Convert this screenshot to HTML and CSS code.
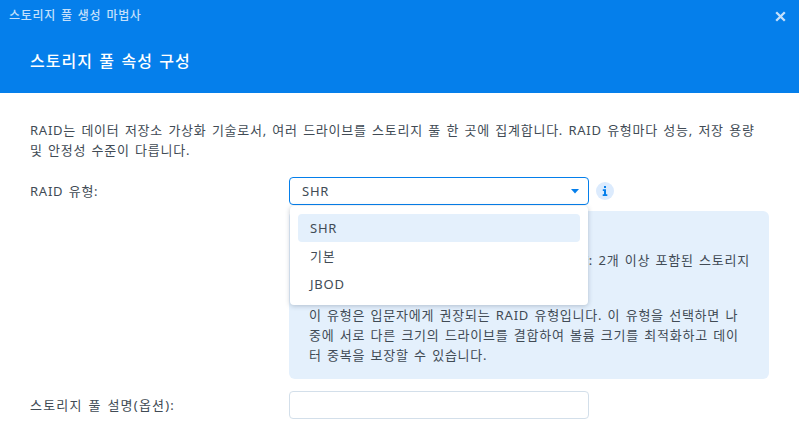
FILE: index.html
```html
<!DOCTYPE html>
<html lang="ko">
<head>
<meta charset="utf-8">
<title>스토리지 풀 생성 마법사</title>
<link rel="stylesheet" href="styles.css">
</head>
<body>
<div class="wizard">
  <header class="header">
    <div class="titlebar">
      <span class="app-title">스토리지 풀 생성 마법사</span>
      <svg class="close" width="11" height="11" viewBox="0 0 11 11" aria-hidden="true"><path d="M1.2 1.2 9.8 9.8M9.8 1.2 1.2 9.8" stroke="#c4e0fb" stroke-width="2.3" fill="none"/></svg>
    </div>
    <h1 class="step-title">스토리지 풀 속성 구성</h1>
  </header>
  <main class="content">
    <p class="intro">RAID는 데이터 저장소 가상화 기술로서, 여러 드라이브를 스토리지 풀 한 곳에 집계합니다. RAID 유형마다 성능, 저장 용량 및 안정성 수준이 다릅니다.</p>
    <div class="row row-raid">
      <label class="label">RAID 유형:</label>
      <div class="field">
        <div class="select-line">
          <div class="select">
            <span>SHR</span>
            <svg class="caret" width="8" height="5" viewBox="0 0 8 5" aria-hidden="true"><path d="M0 0H8L4 4.6Z" fill="#057feb"/></svg>
          </div>
          <span class="info"><svg width="6" height="10" viewBox="0 0 6 10" aria-hidden="true"><path d="M2 0h2v2H2zM.8 3.3H4V8.2H5.3V10H.7V8.2H2V5H.8Z" fill="#057feb"/></svg></span>
        </div>
        <div class="desc">
          <p class="desc-first">SHR (Synology Hybrid RAID) 드라이브 수량: 2개 이상 포함된 스토리지<br>풀에 사용할 수 있습니다.</p>
          <p>이 유형은 입문자에게 권장되는 RAID 유형입니다. 이 유형을 선택하면 나중에 서로 다른 크기의 드라이브를 결합하여 볼륨 크기를 최적화하고 데이터 중복을 보장할 수 있습니다.</p>
        </div>
        <ul class="menu">
          <li class="option selected">SHR</li>
          <li class="option">기본</li>
          <li class="option">JBOD</li>
        </ul>
      </div>
    </div>
    <div class="row row-desc">
      <label class="label">스토리지 풀 설명(옵션):</label>
      <div class="input"></div>
    </div>
  </main>
</div>
</body>
</html>
```
FILE: styles.css
```css
* { box-sizing: border-box; }
html, body { margin: 0; height: 100%; overflow: hidden; background: #fff; }
body {
  font-family: "Noto Sans", "Noto Sans CJK KR", sans-serif;
  font-size: 13px;
  line-height: 20px;
  letter-spacing: .75px;
  word-spacing: 1.25px;
  color: #414b55;
}
.header { height: 93px; background: #057feb; color: #fff; }
.titlebar {
  height: 32px;
  padding: 0 13px 0 9px;
  display: flex;
  align-items: center;
  justify-content: space-between;
}
.app-title { font-size: 12px; font-weight: 500; color: #c4e0fb; letter-spacing: .7px; }
.close { display: block; }
.step-title {
  margin: 17px 0 0 30px;
  font-size: 16px;
  line-height: 24px;
  font-weight: 500;
  letter-spacing: 1px;
}
.content { padding: 27px 30px 0; }
.intro { margin: 0 0 17px; width: 739px; }
.row { display: flex; }
.label { width: 259px; flex: none; }
.row-raid .label { padding-top: 4px; }
.row-desc .label { letter-spacing: 1.2px; }
.field { position: relative; width: 480px; }
.select-line { display: flex; align-items: center; gap: 7px; }
.select {
  width: 300px;
  height: 28px;
  padding: 0 9px 0 12px;
  border: 1px solid #057feb;
  border-radius: 4px;
  display: flex;
  align-items: center;
  justify-content: space-between;
  background: #fff;
}
.info {
  width: 18px;
  height: 18px;
  border-radius: 50%;
  background: #dcebfd;
  display: flex;
  align-items: center;
  justify-content: center;
}
.desc {
  margin-top: 6px;
  height: 168px;
  padding: 39px 20px 0;
  background: #e4f0fc;
  border-radius: 6px;
  word-break: break-all;
}
.desc p { margin: 0; }
.desc-first { margin-bottom: 15px !important; white-space: nowrap; }
.menu {
  position: absolute;
  top: 29px;
  left: 1px;
  width: 298px;
  height: 99px;
  margin: 0;
  padding: 8px;
  list-style: none;
  background: #fff;
  border-radius: 4px;
  box-shadow: 0 1px 5px rgba(40, 60, 90, .28);
}
.option { height: 28px; line-height: 28px; padding: 0 12px; border-radius: 4px; }
.option.selected { background: #e4f0fc; }
.row-desc { margin-top: 12px; align-items: center; }
.input {
  width: 300px;
  height: 28px;
  border: 1px solid #d3dfea;
  border-radius: 4px;
  background: #fff;
}
```
